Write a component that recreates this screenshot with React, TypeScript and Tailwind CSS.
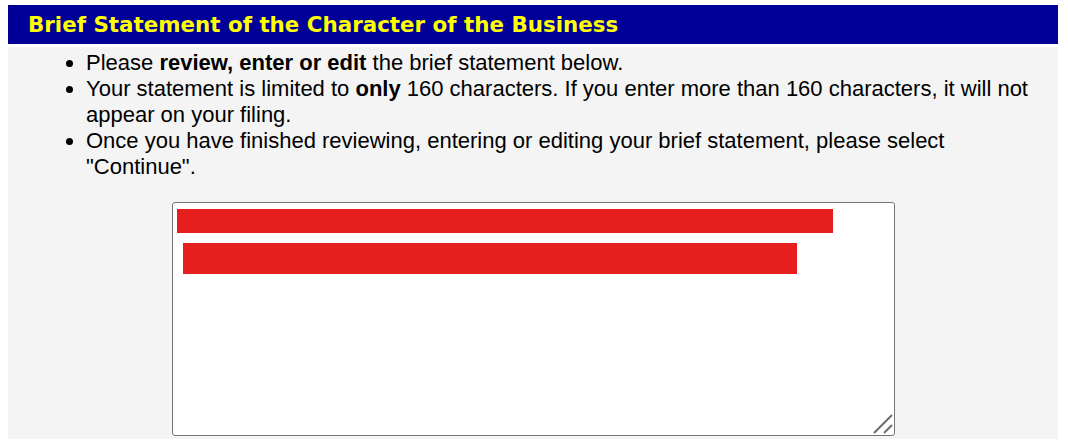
export default function App() {
  return (
    <div className="min-h-screen bg-white pt-[5px] pl-[8px] pr-[10px] font-['Liberation_Sans',Arial,sans-serif] text-black">
      <div className="flex h-[39px] w-[1050px] items-center bg-[#000099] pl-[20px]">
        <h1 className="font-['DejaVu_Sans',Verdana,sans-serif] text-[21.4px] font-bold leading-none text-[#ffff00]">
          Brief Statement of the Character of the Business
        </h1>
      </div>
      <div className="mt-[3px] flex h-[392px] w-[1050px] flex-col bg-[#f4f4f4]">
        <ul className="mt-[3px] list-disc pl-[78px] pr-[18px] text-[22px] leading-[26px]">
          <li>
            Please <b>review, enter or edit</b> the brief statement below.
          </li>
          <li>
            Your statement is limited to <b>only</b> 160 characters. If you
            enter more than 160 characters, it will not appear on your filing.
          </li>
          <li>
            Once you have finished reviewing, entering or editing your brief
            statement, please select "Continue".
          </li>
        </ul>
        <div className="relative mx-auto mt-[22px] h-[234px] w-[723px]">
          <textarea
            className="block h-full w-full resize-none rounded-[3px] border border-[#767676] bg-white"
            defaultValue=""
          />
          <div className="pointer-events-none absolute left-[5px] top-[7px] h-[24px] w-[656px] bg-[#e61e1e]" />
          <div className="pointer-events-none absolute left-[11px] top-[41px] h-[31px] w-[614px] bg-[#e61e1e]" />
          <svg
            className="pointer-events-none absolute bottom-[2px] right-[2px]"
            width="20"
            height="20"
            viewBox="0 0 20 20"
          >
            <line x1="1" y1="19" x2="19" y2="1" stroke="#6b6b6b" strokeWidth="2" />
            <line x1="11" y1="19" x2="19" y2="11" stroke="#6b6b6b" strokeWidth="2" />
          </svg>
        </div>
      </div>
    </div>
  );
}
